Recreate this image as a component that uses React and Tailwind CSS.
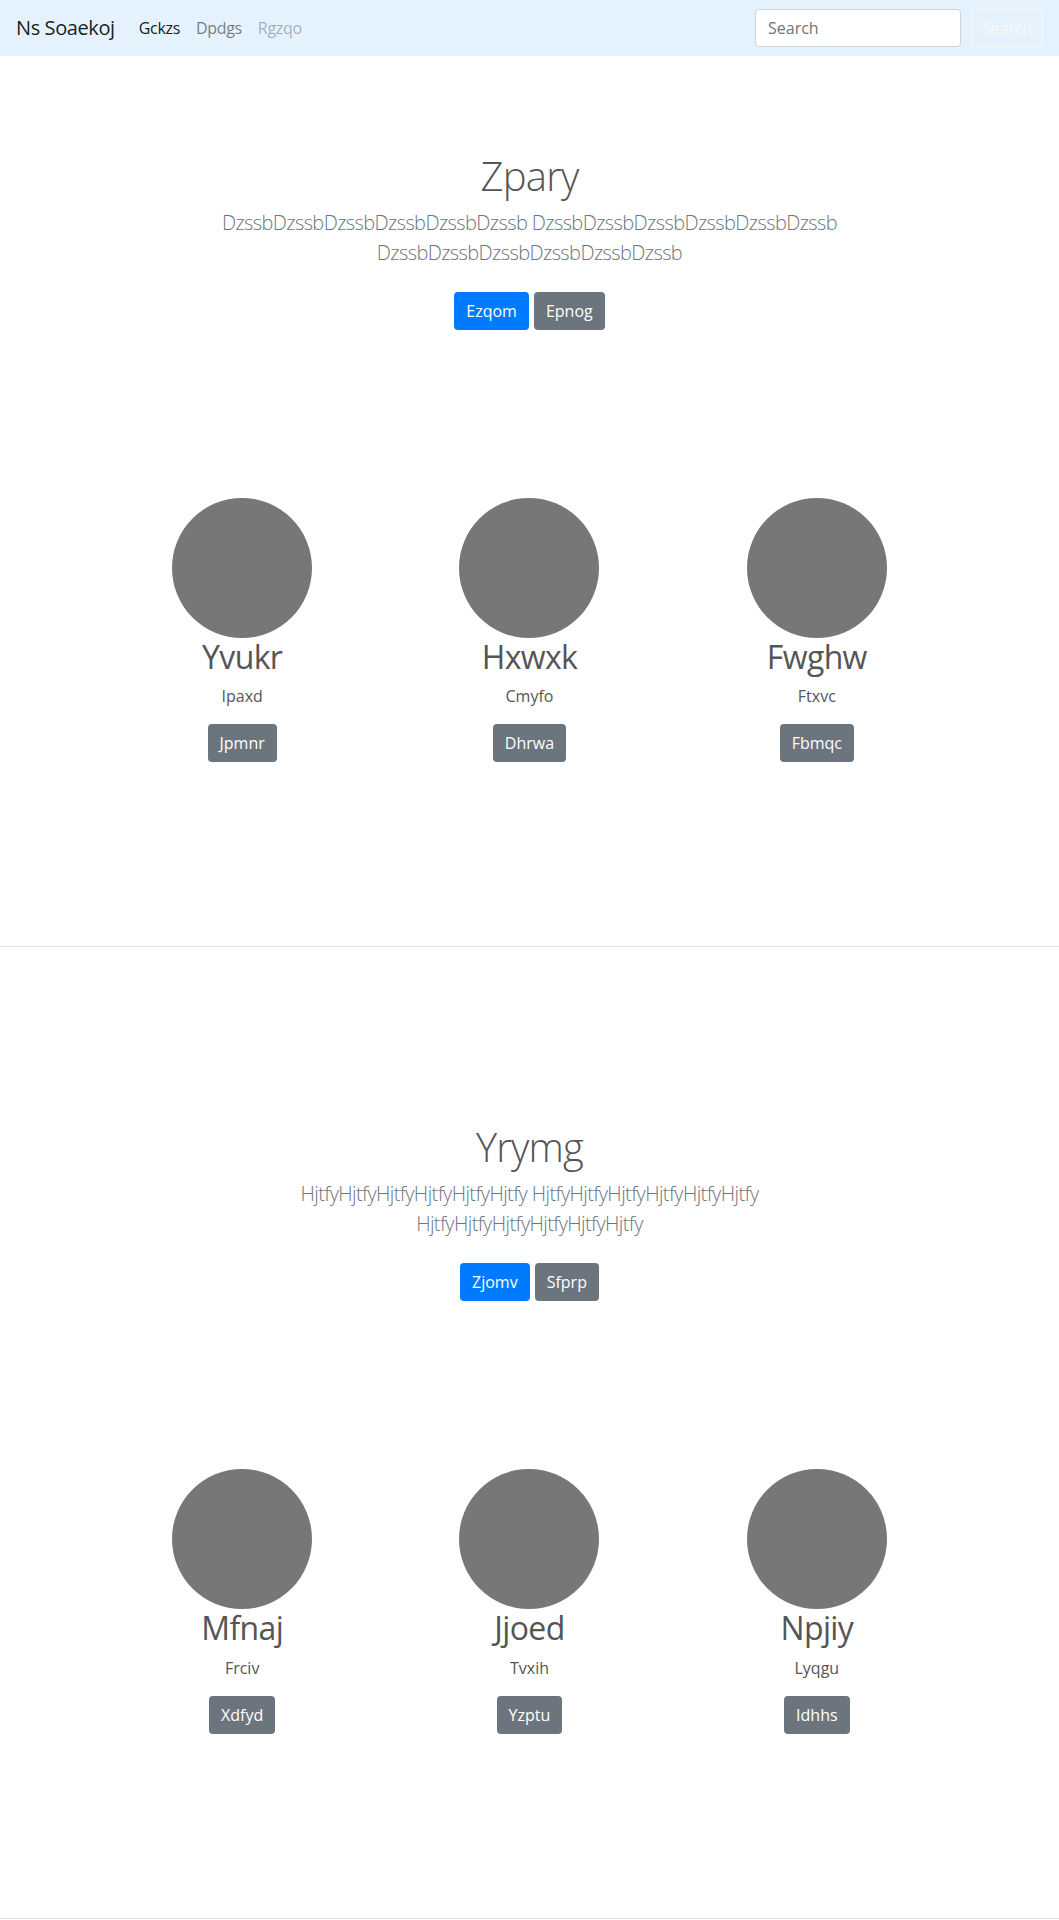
const sections = [
  {
    title: "Zpary",
    lead: "DzssbDzssbDzssbDzssbDzssbDzssb DzssbDzssbDzssbDzssbDzssbDzssb DzssbDzssbDzssbDzssbDzssbDzssb",
    primary: "Ezqom",
    secondary: "Epnog",
    cards: [
      { name: "Yvukr", sub: "Ipaxd", action: "Jpmnr" },
      { name: "Hxwxk", sub: "Cmyfo", action: "Dhrwa" },
      { name: "Fwghw", sub: "Ftxvc", action: "Fbmqc" },
    ],
  },
  {
    title: "Yrymg",
    lead: "HjtfyHjtfyHjtfyHjtfyHjtfyHjtfy HjtfyHjtfyHjtfyHjtfyHjtfyHjtfy HjtfyHjtfyHjtfyHjtfyHjtfyHjtfy",
    primary: "Zjomv",
    secondary: "Sfprp",
    cards: [
      { name: "Mfnaj", sub: "Frciv", action: "Xdfyd" },
      { name: "Jjoed", sub: "Tvxih", action: "Yzptu" },
      { name: "Npjiy", sub: "Lyqgu", action: "Idhhs" },
    ],
  },
];

const font = { fontFamily: '"Segoe UI", "Open Sans", "Noto Sans", sans-serif' };

const Navbar = () => (
  <nav className="flex h-14 items-center bg-[#e3f2fd] pl-4 pr-4">
    <a className="mr-4 text-[20px] leading-[30px] tracking-[-0.02em] text-[rgba(0,0,0,0.9)]">Ns Soaekoj</a>
    <ul className="flex items-center text-[16px] leading-6 tracking-[-0.02em]">
      <li className="px-2 text-[rgba(0,0,0,0.9)]">Gckzs</li>
      <li className="px-2 text-[rgba(0,0,0,0.5)]">Dpdgs</li>
      <li className="px-2 text-[rgba(0,0,0,0.3)]">Rgzqo</li>
    </ul>
    <form className="ml-auto flex items-center">
      <input
        type="search"
        placeholder="Search"
        className="mr-[10px] h-[38px] w-[206px] rounded border border-[#ced4da] bg-white px-3 text-[16px] text-[#495057] placeholder:text-[#6c757d] outline-none"
        style={font}
      />
      <button
        type="button"
        className="h-[38px] w-[72px] rounded border border-[#f8f9fa] text-[16px] text-[#f8f9fa]"
        style={font}
      >
        Search
      </button>
    </form>
  </nav>
);

const Card = ({ card }) => (
  <div className="flex flex-col items-center text-center">
    <svg width="140" height="140" className="block">
      <circle cx="70" cy="70" r="70" fill="#777" />
    </svg>
    <h2 className="mb-2 text-[32px] leading-[38.4px] tracking-[-0.02em] text-[#555]">{card.name}</h2>
    <p className="mb-4 text-[16px] leading-6 text-[#555]">{card.sub}</p>
    <button className="h-[38px] rounded bg-[#6c757d] px-3 text-[16px] text-white" style={font}>
      {card.action}
    </button>
  </div>
);

const Section = ({ data, first }) => (
  <section className={first ? "" : "mt-20"}>
    <div className="px-4 pt-24 text-center">
      <h1 className="mb-2 text-[40px] font-light leading-[48px] tracking-[-0.02em] text-[#555]">{data.title}</h1>
      <p className="mx-auto max-w-[650px] text-[20px] font-light leading-[30px] tracking-[-0.03em] text-[#6c757d]">
        {data.lead}
      </p>
      <div className="mt-6 flex justify-center gap-[5px]">
        <button className="h-[38px] rounded bg-[#007bff] px-3 text-[16px] text-white" style={font}>
          {data.primary}
        </button>
        <button className="h-[38px] rounded bg-[#6c757d] px-3 text-[16px] text-white" style={font}>
          {data.secondary}
        </button>
      </div>
    </div>
    <div className="mx-auto grid max-w-[862px] grid-cols-3 pb-[184px] pt-[168px]">
      {data.cards.map((card) => (
        <Card key={card.name} card={card} />
      ))}
    </div>
    <hr className="border-0 border-t border-[#e3e3e3]" />
  </section>
);

export default function App() {
  return (
    <div className="min-h-screen bg-white" style={font}>
      <Navbar />
      {sections.map((s, i) => (
        <Section key={s.title} data={s} first={i === 0} />
      ))}
    </div>
  );
}
